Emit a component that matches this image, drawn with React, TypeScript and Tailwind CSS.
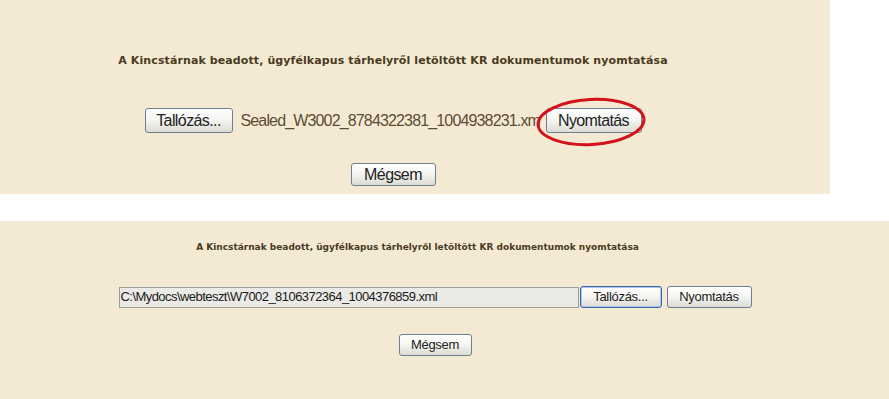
import React from "react";

const sans = { fontFamily: '"Liberation Sans", Arial, sans-serif' };
const title = { fontFamily: '"DejaVu Sans", Verdana, sans-serif' };

function XpButton({
  children,
  className = "",
  focused = false,
}: {
  children: React.ReactNode;
  className?: string;
  focused?: boolean;
}) {
  return (
    <button
      type="button"
      style={sans}
      className={
        "flex items-center justify-center rounded-[3px] border bg-gradient-to-b from-white via-[#f4f4f0] to-[#dcdcd4] text-[#222] " +
        (focused ? "border-[#3f64a8] shadow-[inset_0_0_0_1px_#a9c4ef] " : "border-[#6f7f93] ") +
        className
      }
    >
      {children}
    </button>
  );
}

export default function App() {
  return (
    <div className="flex h-[399px] w-[889px] flex-col overflow-hidden bg-white">
      {/* top screenshot */}
      <div className="flex h-[194px] w-[830px] flex-col items-center bg-[#f4ead3] pr-[44px]">
        <div
          style={title}
          className="mt-[54px] text-[11px] leading-[14px] font-bold tracking-[0.1px] text-[#4a3a1e]"
        >
          A Kincstárnak beadott, ügyfélkapus tárhelyről letöltött KR dokumentumok nyomtatása
        </div>
        <div className="mt-[40px] flex items-center">
          <XpButton className="h-[25px] w-[88px] text-[16px] tracking-[-0.6px]">
            Tallózás...
          </XpButton>
          <span
            style={sans}
            className="ml-[8px] w-[305px] overflow-hidden text-[16px] whitespace-nowrap tracking-[-0.85px] text-[#5b4d33]"
          >
            Sealed_W3002_8784322381_1004938231.xm
          </span>
          <span className="relative">
            <XpButton className="h-[25px] w-[96px] text-[16px] tracking-[-0.6px]">
              Nyomtatás
            </XpButton>
            <svg
              className="pointer-events-none absolute top-[-11px] left-[-11px]"
              width="114"
              height="52"
              viewBox="0 0 114 52"
            >
              <ellipse
                cx="56"
                cy="25"
                rx="53"
                ry="22.5"
                fill="none"
                stroke="#d4121b"
                strokeWidth="3"
                transform="rotate(-3 56 25)"
              />
            </svg>
          </span>
        </div>
        <XpButton className="mt-[30px] h-[23px] w-[85px] text-[16px] tracking-[-0.6px]">
          Mégsem
        </XpButton>
      </div>

      {/* bottom screenshot */}
      <div className="mt-[27px] flex h-[178px] w-full flex-col items-center bg-[#f4ead3] pr-[19px]">
        <div
          style={title}
          className="mt-[20px] mr-[35px] text-[9px] leading-[12px] font-bold tracking-[0px] text-[#4a3a1e]"
        >
          A Kincstárnak beadott, ügyfélkapus tárhelyről letöltött KR dokumentumok nyomtatása
        </div>
        <div className="mt-[33px] flex items-center">
          <div
            style={sans}
            className="flex h-[21px] w-[460px] items-center border border-[#9c9c98] bg-[#ebeae6] pl-[1px] text-[13px] tracking-[-0.55px] text-[#1a1a1a]"
          >
            C:\Mydocs\webteszt\W7002_8106372364_1004376859.xml
          </div>
          <XpButton focused className="ml-[1px] h-[22px] w-[82px] text-[13px] tracking-[-0.3px]">
            Tallózás...
          </XpButton>
          <XpButton className="ml-[5px] h-[22px] w-[85px] text-[13px] tracking-[-0.3px]">
            Nyomtatás
          </XpButton>
        </div>
        <XpButton className="mt-[26px] h-[22px] w-[73px] text-[13px] tracking-[-0.3px]">
          Mégsem
        </XpButton>
      </div>
    </div>
  );
}
